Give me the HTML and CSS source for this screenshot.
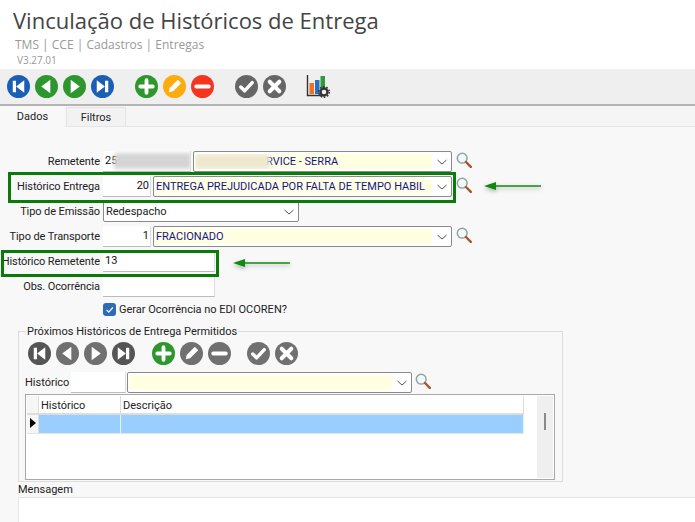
FILE: index.html
```html
<!DOCTYPE html>
<html lang="pt-BR">
<head>
<meta charset="utf-8">
<title>Vinculação de Históricos de Entrega</title>
<link rel="stylesheet" href="styles.css">
</head>
<body>
<svg class="defs" width="0" height="0" aria-hidden="true">
  <symbol id="first" viewBox="0 0 24 24"><rect x="6" y="6" width="3.4" height="12" fill="#fff"/><path d="M18 5.500v13L9.500 12z" fill="#fff"/></symbol>
  <symbol id="prev" viewBox="0 0 24 24"><path d="M16 5v14L6.500 12z" fill="#fff"/></symbol>
  <symbol id="next" viewBox="0 0 24 24"><path d="M8 5v14l9.500-7z" fill="#fff"/></symbol>
  <symbol id="last" viewBox="0 0 24 24"><rect x="14.600" y="6" width="3.400" height="12" fill="#fff"/><path d="M6 5.500v13l8.500-6.500z" fill="#fff"/></symbol>
  <symbol id="plus" viewBox="0 0 24 24"><path d="M12 5.500v13M5.500 12h13" stroke="#fff" stroke-width="4" stroke-linecap="round"/></symbol>
  <symbol id="minus" viewBox="0 0 24 24"><path d="M5.500 12h13" stroke="#fff" stroke-width="4" stroke-linecap="round"/></symbol>
  <symbol id="pencil" viewBox="0 0 24 24"><path d="M6 18l1-4.500 8.500-8.500 3.500 3.500-8.500 8.500z" fill="#fff"/></symbol>
  <symbol id="check" viewBox="0 0 24 24"><path d="M6 12.500l4 4 8-8.500" fill="none" stroke="#fff" stroke-width="3.600" stroke-linecap="round" stroke-linejoin="round"/></symbol>
  <symbol id="cross" viewBox="0 0 24 24"><path d="M7 7l10 10M17 7L7 17" stroke="#fff" stroke-width="4.200" stroke-linecap="round"/></symbol>
  <symbol id="lens" viewBox="0 0 16 16"><circle cx="6.200" cy="6.200" r="4.900" fill="#f4f8f8" stroke="#8fa5a5" stroke-width="1.500"/><path d="M10 10l4.800 4.800" stroke="#a5562a" stroke-width="2.400" stroke-linecap="round"/></symbol>
  <symbol id="chev" viewBox="0 0 12 8"><path d="M1.500 2l4.500 4 4.500-4" fill="none" stroke="#555" stroke-width="1"/></symbol>
</svg>

<header class="page-head">
  <h1 class="title">Vinculação de Históricos de Entrega</h1>
  <p class="crumbs">TMS | CCE | Cadastros | Entregas</p>
  <p class="version">V3.27.01</p>
</header>

<nav class="toolbar">
  <div class="group">
    <span class="btn blue"><svg><use href="#first"/></svg></span>
    <span class="btn green"><svg><use href="#prev"/></svg></span>
    <span class="btn green"><svg><use href="#next"/></svg></span>
    <span class="btn blue"><svg><use href="#last"/></svg></span>
  </div>
  <div class="group">
    <span class="btn green"><svg><use href="#plus"/></svg></span>
    <span class="btn orange"><svg><use href="#pencil"/></svg></span>
    <span class="btn red"><svg><use href="#minus"/></svg></span>
  </div>
  <div class="group">
    <span class="btn gray"><svg><use href="#check"/></svg></span>
    <span class="btn gray"><svg><use href="#cross"/></svg></span>
  </div>
  <svg class="chart" width="24" height="24" viewBox="0 0 24 24">
    <path d="M1.500 1v20.500h16" fill="none" stroke="#333" stroke-width="1.400"/>
    <rect x="3.500" y="9" width="4.500" height="11" fill="#f07020"/>
    <rect x="9" y="6" width="4.500" height="14" fill="#2a6fc0"/>
    <rect x="14.500" y="2" width="4.500" height="12" fill="#2f9a3a"/>
    <circle cx="18" cy="18" r="3.500" fill="none" stroke="#333" stroke-width="2.400"/>
    <circle cx="18" cy="18" r="5.300" fill="none" stroke="#333" stroke-width="1.400" stroke-dasharray="1.700 1.630"/>
  </svg>
</nav>

<div class="tabs">
  <span class="tab active">Dados</span>
  <span class="tab">Filtros</span>
</div>

<main class="panel">
  <form class="form">
    <div class="row">
      <label class="lbl">Remetente</label>
      <span class="input w88">25<i class="smear smear-gray"></i></span>
      <span class="select w259"><span class="fill pad-smear">RVICE - SERRA<i class="smear smear-cream"></i></span><svg class="chev"><use href="#chev"/></svg></span>
      <svg class="lens"><use href="#lens"/></svg>
    </div>
    <div class="row">
      <label class="lbl">Histórico Entrega</label>
      <span class="input w48 num">20</span>
      <span class="select w299"><span class="fill">ENTREGA PREJUDICADA POR FALTA DE TEMPO HABIL</span><svg class="chev"><use href="#chev"/></svg></span>
      <svg class="lens"><use href="#lens"/></svg>
    </div>
    <div class="row">
      <label class="lbl">Tipo de Emissão</label>
      <span class="select w196 plain"><span class="fill">Redespacho</span><svg class="chev"><use href="#chev"/></svg></span>
    </div>
    <div class="row">
      <label class="lbl">Tipo de Transporte</label>
      <span class="input w48 num">1</span>
      <span class="select w299"><span class="fill">FRACIONADO</span><svg class="chev"><use href="#chev"/></svg></span>
      <svg class="lens"><use href="#lens"/></svg>
    </div>
    <div class="row">
      <label class="lbl">Histórico Remetente</label>
      <span class="input w112">13</span>
    </div>
    <div class="row">
      <label class="lbl">Obs. Ocorrência</label>
      <span class="input w112"></span>
    </div>
    <div class="row check-row">
      <span class="checkbox"><svg width="13" height="13" viewBox="0 0 13 13"><path d="M3.500 6.800l2.300 2.300 4-4.600" fill="none" stroke="#fff" stroke-width="1.200"/></svg></span>
      <span class="check-text">Gerar Ocorrência no EDI OCOREN?</span>
    </div>
  </form>

  <fieldset class="box">
    <legend class="legend">Próximos Históricos de Entrega Permitidos</legend>
    <div class="subbar">
      <div class="group">
        <span class="btn dark"><svg><use href="#first"/></svg></span>
        <span class="btn mid"><svg><use href="#prev"/></svg></span>
        <span class="btn mid"><svg><use href="#next"/></svg></span>
        <span class="btn dark"><svg><use href="#last"/></svg></span>
      </div>
      <div class="group">
        <span class="btn green"><svg><use href="#plus"/></svg></span>
        <span class="btn mid"><svg><use href="#pencil"/></svg></span>
        <span class="btn mid"><svg><use href="#minus"/></svg></span>
      </div>
      <div class="group">
        <span class="btn mid"><svg><use href="#check"/></svg></span>
        <span class="btn mid"><svg><use href="#cross"/></svg></span>
      </div>
    </div>
    <div class="lookup">
      <label class="lookup-lbl">Histórico</label>
      <span class="input w55"></span>
      <span class="select w285"><span class="fill"></span><svg class="chev"><use href="#chev"/></svg></span>
      <svg class="lens"><use href="#lens"/></svg>
    </div>
    <div class="grid">
      <div class="grid-main">
        <div class="grid-row head">
          <span class="ind"></span><span class="c1">Histórico</span><span class="c2">Descrição</span>
        </div>
        <div class="grid-row sel">
          <span class="ind"><i class="pointer"></i></span><span class="c1"></span><span class="c2"></span>
        </div>
      </div>
      <div class="scroll"><i class="thumb"></i></div>
    </div>
  </fieldset>

  <div class="msg-label">Mensagem</div>
  <div class="msg"></div>
</main>

<div class="mark mark-a"></div>
<div class="mark mark-b"></div>
<svg class="arrow arrow-a" width="60" height="14" viewBox="0 0 60 14"><path d="M58 7H12" stroke="#0f8a0f" stroke-width="1.600"/><path d="M1 7l12-4v8z" fill="#0f8a0f"/></svg>
<svg class="arrow arrow-b" width="60" height="14" viewBox="0 0 60 14"><path d="M58 7H12" stroke="#0f8a0f" stroke-width="1.600"/><path d="M1 7l12-4v8z" fill="#0f8a0f"/></svg>
</body>
</html>
```
FILE: styles.css
```css
* { box-sizing: border-box; }
html, body { margin: 0; padding: 0; }
body {
  position: relative;
  width: 695px;
  height: 522px;
  overflow: hidden;
  background: #fff;
  font-family: Roboto, "Liberation Sans", Arial, sans-serif;
  font-size: 11px;
  color: #222;
}
.defs { position: absolute; }

.page-head { height: 69px; padding: 5px 0 0 13px; font-family: "Open Sans", sans-serif; }
.title { margin: 0; font-size: 22px; line-height: 30px; font-weight: 400; color: #444; }
.crumbs { margin: 2px 0 0 2px; font-size: 12px; line-height: 16px; color: #999; }
.version { margin: 0 0 0 4px; font-size: 10px; line-height: 14px; color: #999; }

.toolbar {
  height: 37px;
  display: flex;
  align-items: center;
  padding: 0 0 0 7px;
  background: #efefef;
  border-bottom: 2px solid #b4b4b4;
}
.group { display: flex; gap: 5px; }
.toolbar .group { margin-right: 21px; }
.toolbar .group:nth-child(3) { margin-right: 20px; }
.btn { width: 23px; height: 23px; border-radius: 50%; display: block; flex: none; }
.btn svg { display: block; width: 23px; height: 23px; }
.blue { background: #1a5fb4; }
.green { background: #2d962d; }
.orange { background: #ffaa0d; }
.red { background: #f5351f; }
.gray { background: #666; }
.dark { background: #555; }
.mid { background: #707070; }
.chart { display: block; margin-top: -1px; }

.tabs { height: 21px; display: flex; align-items: flex-end; background: #f5f5f5; border-bottom: 1px solid #e6e6e6; }
.tab { width: 60px; height: 19px; line-height: 20px; text-align: center; background: #f2f2f2; border: 1px solid #e4e4e4; border-bottom: 0; margin-left: 1px; color: #222; }
.tab.active { width: 65px; height: 21px; margin-left: 0; margin-bottom: -1px; padding-top: 2px; line-height: 17px; background: #f8f8f8; border: 0; }

.panel { height: 395px; background: #f8f8f8; padding: 24px 0 0; }
.form { display: flex; flex-direction: column; }
.row { height: 25px; display: flex; align-items: flex-start; gap: 2px; }
.lbl { width: 100px; margin-right: 1px; flex: none; text-align: right; line-height: 21px; letter-spacing: -0.1px; white-space: nowrap; color: #222; }

.input {
  position: relative;
  display: block;
  height: 21px;
  flex: none;
  line-height: 20px;
  padding: 0 2px;
  background: #fff;
  border-right: 1px solid #ddd;
  border-bottom: 1px solid #bbb;
  color: #111;
  white-space: nowrap;
  overflow: hidden;
}
.num { text-align: right; padding-right: 1px; }
.w48 { width: 48px; }
.w55 { width: 55px; }
.w88 { width: 88px; }
.w112 { width: 112px; }
.select {
  position: relative;
  display: flex;
  flex: none;
  height: 21px;
  padding: 2px 0 2px 1px;
  background: #fff;
  border: 1px solid #8a8a8a;
  border-radius: 2px;
}
.w196 { width: 196px; }
.w259 { width: 259px; }
.w285 { width: 285px; }
.w299 { width: 299px; }
.fill {
  position: relative;
  flex: 1;
  line-height: 15px;
  padding-left: 1px;
  background: #ffffe2;
  color: #14148c;
  white-space: nowrap;
  overflow: hidden;
}
.plain .fill { background: #fff; color: #222; }
.pad-smear { padding-left: 71px; }
.chev { flex: none; width: 12px; height: 8px; margin: 4px 3px 0 4px; }
.lens { display: block; flex: none; width: 16px; height: 16px; margin: 1px 0 0 2px; }

.smear { position: absolute; display: block; filter: blur(2px); }
.smear-gray { left: 11px; top: 2px; width: 77px; height: 16px; background: #d4d4d4; }
.smear-cream { left: 0; top: 0; width: 75px; height: 15px; background: #eee8d0; }

.check-row { height: 16px; padding: 0 0 0 103px; gap: 3px; align-items: center; }
.checkbox { width: 13px; height: 13px; border-radius: 3px; background: #2a6cb8; display: block; }
.checkbox svg { display: block; }
.check-text { color: #222; }

.box {
  display: block;
  width: 545px;
  height: 157px;
  margin: 8px 0 0 18px;
  padding: 0 6px;
  min-width: 0;
  border: 1px solid #dcdcdc;
}
.legend { padding: 0 1px; margin-left: 1px; line-height: 13px; color: #222; }
.subbar { display: flex; height: 24px; margin-top: 4px; padding-left: 3px; }
.subbar .group:nth-child(1) { margin-right: 17px; }
.subbar .group:nth-child(2) { margin-right: 16px; }
.lookup { display: flex; gap: 1px; margin-top: 6px; height: 21px; }
.lookup-lbl { width: 45px; line-height: 21px; flex: none; }
.grid {
  display: flex;
  justify-content: space-between;
  width: 530px;
  height: 86px;
  margin-top: 1px;
  padding: 1px;
  background: #fff;
  border: 1px solid #a8a8a8;
}
.grid-main { width: 497px; }
.grid-row { display: flex; height: 19px; border-bottom: 1px solid #e4e4e4; }
.ind { width: 12px; flex: none; background: #f6f6f6; border-right: 1px solid #ddd; display: block; position: relative; }
.c1 { width: 82px; flex: none; padding-left: 2px; line-height: 20px; border-right: 1px solid #ddd; }
.c2 { flex: 1; padding-left: 2px; line-height: 20px; border-right: 1px solid #ddd; }
.head { border-bottom: 2px solid #ddd; }
.sel .c1, .sel .c2 { background: #99ceff; border-right-color: #e8f2fb; }
.pointer { position: absolute; left: 3px; top: 3px; border-style: solid; border-width: 5.500px 0 5.500px 6px; border-color: transparent transparent transparent #000; }
.scroll { width: 16px; flex: none; background: #efefef; padding: 17px 0 0 7px; }
.thumb { display: block; width: 2px; height: 17px; background: #8a8a8a; }

.msg-label { margin: 1px 0 0 18px; line-height: 14px; color: #222; }
.msg { height: 30px; margin-left: 18px; background: #fff; border: 1px solid #e6e6e6; border-right: 0; border-bottom: 0; }

.mark { position: absolute; border: 3px solid #0a7a0a; }
.mark-a { left: 8px; top: 172px; width: 448px; height: 31px; }
.mark-b { left: 1px; top: 250px; width: 218px; height: 27px; }
.arrow { position: absolute; filter: drop-shadow(0 2px 2px rgba(0,0,0,.3)); }
.arrow-a { left: 483px; top: 179px; }
.arrow-b { left: 232px; top: 256px; }
```
